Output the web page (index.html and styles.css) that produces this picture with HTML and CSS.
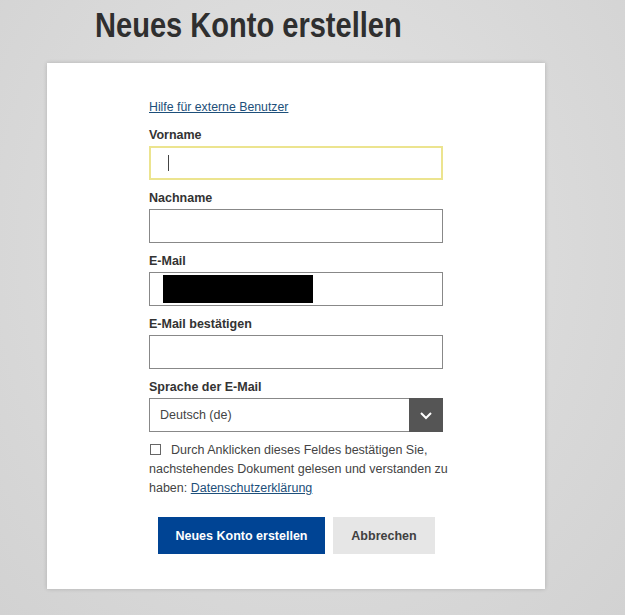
FILE: index.html
```html
<!DOCTYPE html>
<html lang="de">
<head>
<meta charset="utf-8">
<link rel="stylesheet" href="styles.css">
</head>
<body>
<header class="head"><h1 class="title">Neues Konto erstellen</h1></header>
<main class="card">
  <form class="form">
    <a class="help" href="#">Hilfe für externe Benutzer</a>
    <label class="label">Vorname</label>
    <div class="input focus"><span class="caret"></span></div>
    <label class="label">Nachname</label>
    <div class="input"></div>
    <label class="label">E-Mail</label>
    <div class="input"><span class="redact"></span></div>
    <label class="label">E-Mail bestätigen</label>
    <div class="input"></div>
    <label class="label">Sprache der E-Mail</label>
    <div class="select">
      <span class="select-text">Deutsch (de)</span>
      <span class="select-btn"><svg width="14" height="9" viewBox="0 0 14 9"><path d="M2 2 L7 7 L12 2" fill="none" stroke="#fff" stroke-width="2"/></svg></span>
    </div>
    <p class="consent"><span class="box"></span>Durch Anklicken dieses Feldes bestätigen Sie,<br>nachstehendes Dokument gelesen und verstanden zu<br>haben: <a href="#">Datenschutzerklärung</a></p>
    <div class="actions">
      <button type="button" class="btn primary">Neues Konto erstellen</button>
      <button type="button" class="btn secondary">Abbrechen</button>
    </div>
  </form>
</main>
</body>
</html>
```
FILE: styles.css
```css
html, body { margin: 0; padding: 0; }
body {
  background: radial-gradient(ellipse at 50% 40%, #e4e4e4 0%, #d9d9d9 60%, #d2d2d2 100%);
  min-height: 615px;
  font-family: "Liberation Sans", Arial, sans-serif;
  color: #333;
  overflow: hidden;
}
.head {
  height: 63px;
  padding: 5px 0 0 95px;
  box-sizing: border-box;
}
.title {
  margin: 0;
  display: inline-block;
  transform: scaleX(0.83);
  transform-origin: left center;
  white-space: nowrap;
  font-size: 35px;
  font-weight: bold;
  color: #2f2f2f;
  line-height: 40px;
}
.card {
  margin-left: 47px;
  width: 498px;
  height: 526px;
  background: #fff;
  box-shadow: 0 0 4px rgba(0,0,0,0.18);
  box-sizing: border-box;
  padding: 36px 0 0 102px;
}
.form { width: 294px; display: flex; flex-direction: column; }
.help { font-size: 12.3px; color: #1d4f7a; text-decoration: underline; line-height: 16px; margin-bottom: 12px; }
.label { font-size: 12.5px; font-weight: bold; color: #333; line-height: 16px; height: 16px; margin-bottom: 3px; }
.input {
  height: 34px;
  border: 1px solid #888;
  box-sizing: border-box;
  margin-bottom: 10px;
  display: flex;
  align-items: center;
}
.input.focus { border: 2px solid #ece48f; }
.caret { width: 1px; height: 16px; background: #444; margin-left: 17px; }
.redact { width: 150px; height: 28px; background: #000; margin-left: 13px; }
.select {
  height: 34px;
  border: 1px solid #888;
  box-sizing: border-box;
  display: flex;
  align-items: stretch;
  margin-bottom: 9px;
}
.select-text { flex: 1; font-size: 12.5px; color: #444; display: flex; align-items: center; padding-left: 10px; }
.select-btn { width: 34px; margin: -1px -1px -1px 0; background: #555; display: flex; align-items: center; justify-content: center; }
.consent { margin: 0; font-size: 12.5px; line-height: 19px; color: #444; white-space: nowrap; }
.consent a { color: #1d4f7a; }
.box { display: inline-block; width: 9px; height: 9px; border: 1px solid #666; margin: 0 10px 0 1px; vertical-align: -1px; }
.actions { display: flex; gap: 8px; margin-top: 19px; padding-left: 9px; }
.btn { border: 0; height: 37px; font-family: "Liberation Sans", Arial, sans-serif; font-size: 12.5px; font-weight: bold; padding: 0; }
.primary { width: 167px; background: #004494; color: #fff; }
.secondary { width: 102px; background: #e6e6e6; color: #404040; }
```
